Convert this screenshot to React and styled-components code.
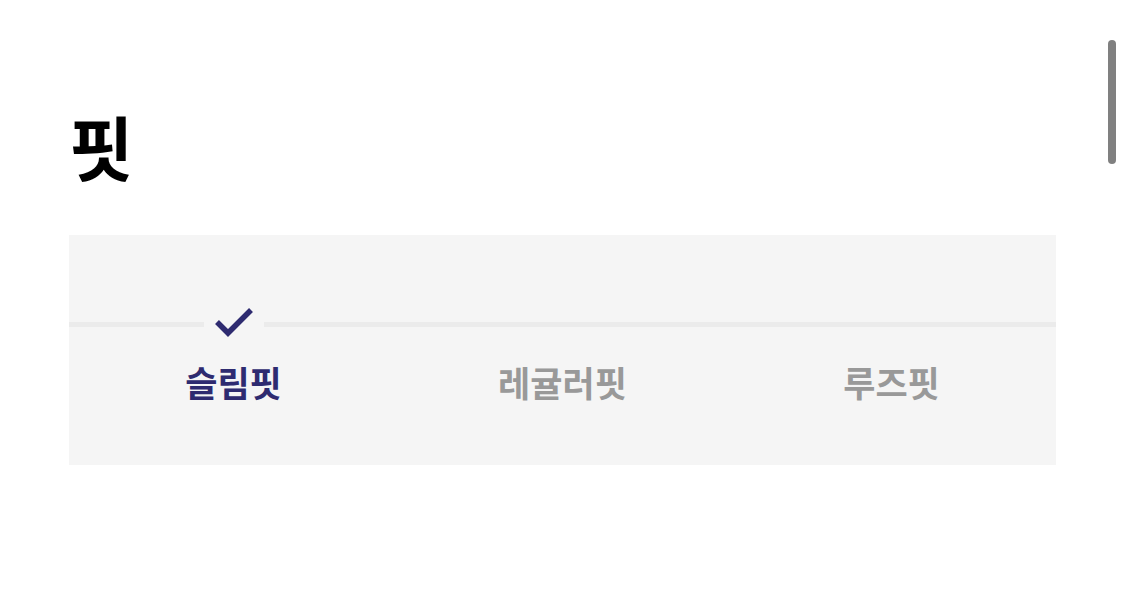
import React, { useState } from 'react';
import styled, { createGlobalStyle } from 'styled-components';

const GlobalStyle = createGlobalStyle`
  html, body {
    margin: 0;
    padding: 0;
    background: #ffffff;
    font-family: "Noto Sans CJK KR", "Noto Sans", sans-serif;
    overflow: hidden;
  }
`;

const Page = styled.div`
  position: relative;
  height: 589px;
  padding: 104px 69px 0 69px;
  box-sizing: border-box;
`;

const Title = styled.h1`
  margin: 0 0 47px 0;
  font-size: 70px;
  line-height: 84px;
  font-weight: 700;
  color: #000;
`;

const Panel = styled.div`
  width: 987px;
  background: #f5f5f5;
  padding: 74px 0 61px 0;
  box-sizing: border-box;
`;

const Options = styled.div`
  display: grid;
  grid-template-columns: repeat(3, 1fr);
`;

const Option = styled.button`
  display: flex;
  flex-direction: column;
  align-items: center;
  border: 0;
  padding: 0;
  background: none;
  cursor: pointer;
  font-family: inherit;
`;

const Track = styled.div`
  display: flex;
  align-items: center;
  width: 100%;
  height: 30px;
`;

const Line = styled.div`
  flex: 1;
  height: 5px;
  background: #ebebeb;
`;

const CheckSlot = styled.div`
  width: 60px;
  display: flex;
  justify-content: center;
  align-items: center;
  margin-top: -4px;
`;

const Label = styled.span`
  margin-top: 21px;
  font-size: 35px;
  line-height: 44px;
  font-weight: 600;
  color: ${({ active }) => (active ? '#2e2b70' : '#999999')};
`;

const Scrollbar = styled.div`
  position: absolute;
  top: 40px;
  right: 9px;
  width: 8px;
  height: 124px;
  border-radius: 4px;
  background: #808080;
`;

const CheckIcon = () => (
  <svg width="40" height="30" viewBox="0 0 40 30">
    <path d="M3 15 L14 26 L37 3" fill="none" stroke="#2e2b70" strokeWidth="5.5" strokeLinecap="butt" strokeLinejoin="miter" />
  </svg>
);

const fits = ['슬림핏', '레귤러핏', '루즈핏'];

export default function App() {
  const [selected, setSelected] = useState(0);
  return (
    <Page>
      <GlobalStyle />
      <Title>핏</Title>
      <Panel>
        <Options>
          {fits.map((fit, i) => (
            <Option key={fit} onClick={() => setSelected(i)}>
              <Track>
                <Line />
                {selected === i && (
                  <CheckSlot>
                    <CheckIcon />
                  </CheckSlot>
                )}
                <Line />
              </Track>
              <Label active={selected === i}>{fit}</Label>
            </Option>
          ))}
        </Options>
      </Panel>
      <Scrollbar />
    </Page>
  );
}
